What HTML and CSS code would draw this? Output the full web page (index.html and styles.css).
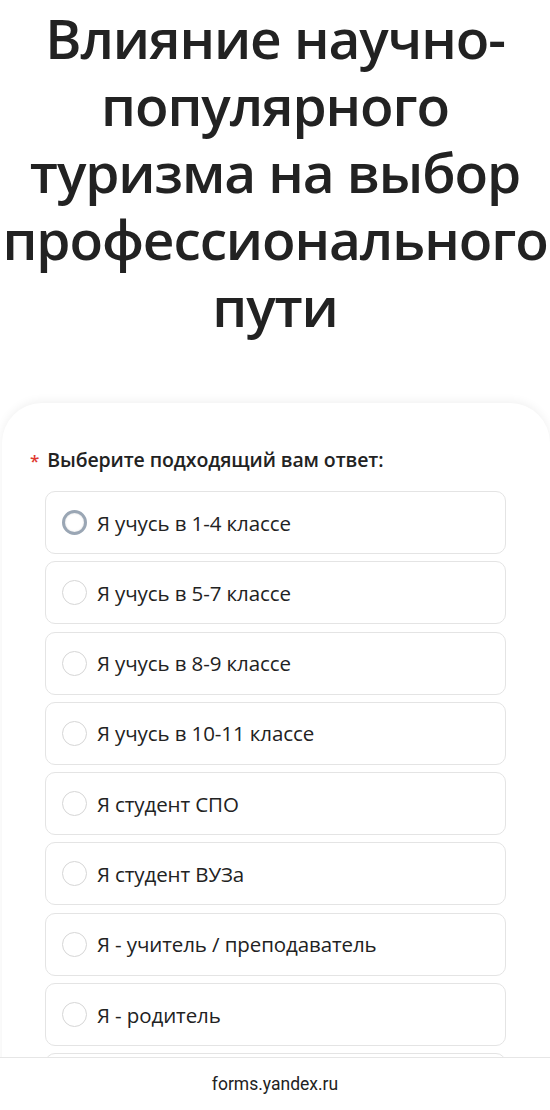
FILE: index.html
```html
<!DOCTYPE html>
<html lang="ru">
<head>
    <meta charset="UTF-8">
    <meta name="viewport" content="width=device-width, initial-scale=1.0">
    <title>Влияние научно-популярного туризма на выбор профессионального пути</title>
    <link rel="stylesheet" href="styles.css">
</head>
<body>
    <h1 class="form-title">Влияние научно-популярного туризма на выбор профессионального пути</h1>

    <div class="form-card">
        <div class="question">
            <div class="question-label"><span class="required">*</span>Выберите подходящий вам ответ:</div>

            <div class="options">
                <label class="option">
                    <input type="radio" name="answer" class="radio focused">
                    <span>Я учусь в 1-4 классе</span>
                </label>
                <label class="option">
                    <input type="radio" name="answer" class="radio">
                    <span>Я учусь в 5-7 классе</span>
                </label>
                <label class="option">
                    <input type="radio" name="answer" class="radio">
                    <span>Я учусь в 8-9 классе</span>
                </label>
                <label class="option">
                    <input type="radio" name="answer" class="radio">
                    <span>Я учусь в 10-11 классе</span>
                </label>
                <label class="option">
                    <input type="radio" name="answer" class="radio">
                    <span>Я студент СПО</span>
                </label>
                <label class="option">
                    <input type="radio" name="answer" class="radio">
                    <span>Я студент ВУЗа</span>
                </label>
                <label class="option">
                    <input type="radio" name="answer" class="radio">
                    <span>Я - учитель / преподаватель</span>
                </label>
                <label class="option">
                    <input type="radio" name="answer" class="radio">
                    <span>Я - родитель</span>
                </label>
                <label class="option">
                    <input type="radio" name="answer" class="radio">
                    <span>Другое</span>
                </label>
            </div>
        </div>
    </div>

    <div class="address-bar">forms.yandex.ru</div>
</body>
</html>
```

FILE: styles.css
```css
body {
    margin: 0;
    background: #fff;
    font-family: 'Open Sans', 'Noto Sans', sans-serif;
    color: #222;
    height: 1110px;
    overflow: hidden;
}

.form-title {
    margin: 0;
    padding: 4px 0 0;
    font-size: 55px;
    font-weight: 600;
    line-height: 67px;
    text-align: center;
    letter-spacing: -1.1px;
    color: #222;
}

.form-card {
    margin: 64px 0 0 2px;
    padding: 43px 0 0;
    background: #fff;
    border-radius: 40px 40px 0 0;
    box-shadow: 0 -2px 10px rgba(0, 0, 0, 0.06);
}

.question-label {
    display: flex;
    align-items: baseline;
    gap: 8px;
    padding-left: 28px;
    font-size: 19.5px;
    font-weight: 600;
    letter-spacing: -0.1px;
    color: #222;
    margin-bottom: 18px;
}

.required {
    color: #e0382f;
    font-size: 17px;
}

.options {
    display: flex;
    flex-direction: column;
    gap: 7.3px;
    margin: 0 44px 0 43px;
}

.option {
    display: flex;
    align-items: center;
    gap: 10px;
    height: 61px;
    padding: 0 16px;
    border: 1px solid #e4e4e4;
    border-radius: 10px;
    font-size: 20.5px;
    letter-spacing: -0.1px;
    color: #222;
}

.radio {
    appearance: none;
    margin: 0;
    width: 25px;
    height: 25px;
    border: 1px solid #d6d6d6;
    border-radius: 50%;
    background: #fff;
    flex-shrink: 0;
}

.radio.focused {
    border: 3px solid #9aa6b4;
    box-shadow: inset 0 0 2px rgba(0, 0, 0, 0.15);
}

.address-bar {
    position: fixed;
    left: 0;
    right: 0;
    bottom: 0;
    height: 52px;
    background: #fff;
    border-top: 1px solid #e6e6e6;
    display: flex;
    align-items: center;
    justify-content: center;
    font-family: 'Roboto', 'Noto Sans', sans-serif;
    font-size: 17.5px;
    color: #222;
}
```
